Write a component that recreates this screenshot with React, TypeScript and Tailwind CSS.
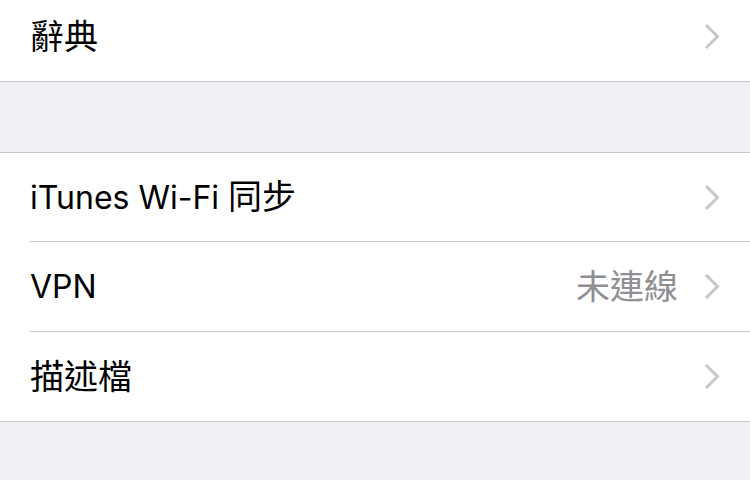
const font = { fontFamily: '"Inter", "Noto Sans CJK TC", sans-serif' };

function Chevron() {
  return (
    <svg width="16" height="27" viewBox="0 0 16 27" className="shrink-0">
      <path d="M2 2 L13.5 13.5 L2 25" fill="none" stroke="#c7c7cc" strokeWidth="3" />
    </svg>
  );
}

function Cjk({ children }: { children: string }) {
  return <span className="text-[34px]">{children}</span>;
}

function Row({
  label,
  value,
  last,
  h,
}: {
  label: React.ReactNode;
  value?: string;
  last?: boolean;
  h: string;
}) {
  return (
    <div className={`flex pl-[30px] ${h}`}>
      <div
        className={`flex flex-1 items-center pr-[30px] ${last ? "" : "border-b border-[#c8c7cc]"}`}
      >
        <span className="flex-1 text-[32px] leading-none text-black">{label}</span>
        {value && (
          <span className="mr-[26px] text-[34px] leading-none text-[#8e8e93]">{value}</span>
        )}
        <Chevron />
      </div>
    </div>
  );
}

export default function App() {
  return (
    <div className="h-[480px] w-[750px] overflow-hidden bg-[#efeff4]" style={font}>
      <div className="flex h-[82px] items-center border-b border-[#c8c7cc] bg-white pb-[8px] pl-[30px] pr-[30px]">
        <span className="flex-1 text-[34px] leading-none text-black">辭典</span>
        <Chevron />
      </div>
      <div className="h-[70px]" />
      <div className="border-y border-[#c8c7cc] bg-white">
        <Row
          h="h-[89px]"
          label={
            <>
              iTunes Wi-Fi <Cjk>同步</Cjk>
            </>
          }
        />
        <Row h="h-[90px]" label="VPN" value="未連線" />
        <Row h="h-[89px]" label={<Cjk>描述檔</Cjk>} last />
      </div>
    </div>
  );
}
